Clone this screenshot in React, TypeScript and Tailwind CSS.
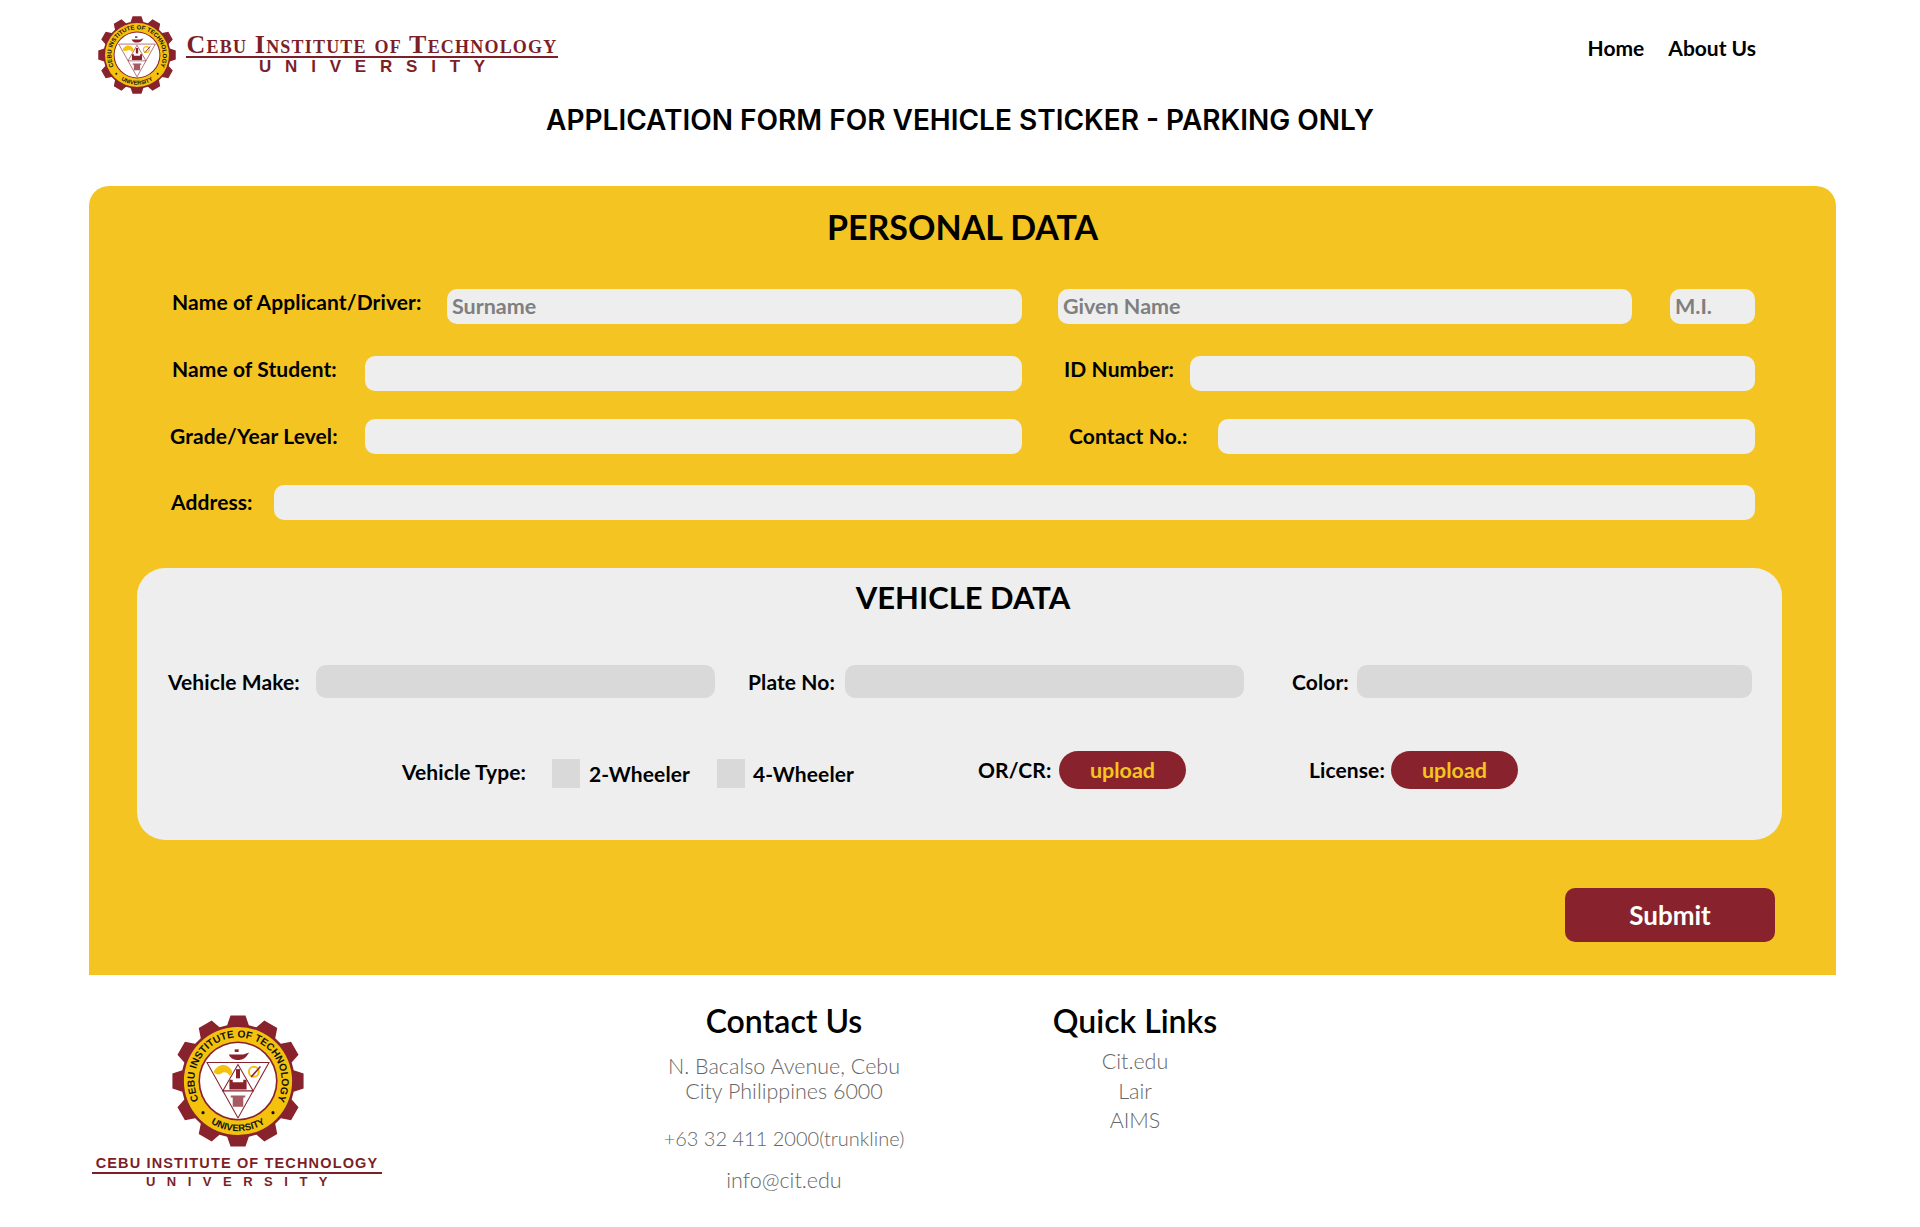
import React from "react";

const gearPoints = (() => {
  const pts: string[] = [];
  for (let i = 0; i < 12; i++) {
    const c = -90 + i * 30;
    const add = (deg: number, r: number) => {
      const a = (deg * Math.PI) / 180;
      pts.push(`${(100 + r * Math.cos(a)).toFixed(2)},${(100 + r * Math.sin(a)).toFixed(2)}`);
    };
    add(c - 11, 86);
    add(c - 6.5, 100);
    add(c + 6.5, 100);
    add(c + 11, 86);
  }
  return pts.join(" ");
})();

function Seal({ id, className }: { id: string; className: string }) {
  return (
    <svg viewBox="0 0 200 200" className={className}>
      <polygon points={gearPoints} fill="#88232d" />
      <circle cx="100" cy="100" r="82" fill="#f4c20d" />
      <circle cx="100" cy="100" r="60" fill="#88232d" />
      <circle cx="100" cy="100" r="57.5" fill="#ffffff" />
      <defs>
        <path id={`${id}-top`} d="M 49.4 142.4 A 66 66 0 1 1 150.6 142.4" />
        <path id={`${id}-bot`} d="M 37.7 143.6 A 76 76 0 0 0 162.3 143.6" />
      </defs>
      <text fontFamily="'Liberation Sans', sans-serif" fontWeight="700" fontSize="15.5" fill="#111111">
        <textPath href={`#${id}-top`} startOffset="50%" textAnchor="middle">CEBU INSTITUTE OF TECHNOLOGY</textPath>
      </text>
      <text fontFamily="'Liberation Sans', sans-serif" fontWeight="700" fontSize="14.5" fill="#111111">
        <textPath href={`#${id}-bot`} startOffset="50%" textAnchor="middle">UNIVERSITY</textPath>
      </text>
      <circle cx="47" cy="148" r="2.4" fill="#111111" />
      <circle cx="153" cy="148" r="2.4" fill="#111111" />
      <polygon points="53,72 147,72 100,156" fill="none" stroke="#88232d" strokeWidth="1.6" />
      <polygon points="100,75 77,115 123,115" fill="none" stroke="#88232d" strokeWidth="1.6" />
      <path d="M86 60 h22 l9 -3 l-3 4 c-2 4 -7 7 -12 7 h-4 c-5 0 -10 -3 -12 -8 z" fill="#88232d" />
      <rect x="95" y="52" width="6" height="4" fill="#88232d" />
      <path d="M63 86 c6 -12 20 -14 27 -3 c3 5 0 8 -3 9 c-2 -5 -8 -7 -13 -3 c-4 2 -8 1 -11 -3 z" fill="#f4c20d" />
      <circle cx="124" cy="86" r="7.5" fill="none" stroke="#f4c20d" strokeWidth="3" />
      <path d="M120 94 L134 78" stroke="#88232d" strokeWidth="2.4" />
      <path d="M97 82 h6 v14 h-6 z" fill="#88232d" />
      <path d="M87 98 h5 v4 h16 v-4 h5 v15 h-26 z" fill="#88232d" />
      <path d="M89 122 h22 v3 h-3 v14 h-16 v-14 h-3 z" fill="#88232d" opacity="0.75" />
    </svg>
  );
}

const labelCls = "font-['Lato','Liberation_Sans',sans-serif] font-bold text-[21px] leading-[24px] tracking-[0.1px] text-black whitespace-nowrap shrink-0";
const inputCls = "h-[35px] bg-[#eeeeee] rounded-[10px] px-[5px] pb-[2px] outline-none font-['Lato',sans-serif] font-bold text-[21.5px] placeholder:text-[#7f7f7f] shrink-0";
const grayCls = "h-[33px] bg-[#d9d9d9] rounded-[10px] outline-none shrink-0";
const uploadCls = "w-[127px] h-[38px] rounded-full bg-[#88232d] text-[#f4c522] font-['Lato',sans-serif] font-bold text-[21.5px] flex items-center justify-center shrink-0";

export default function App() {
  return (
    <div className="w-[1920px] h-[1227px] bg-white overflow-hidden font-['Lato',sans-serif]">
      <header className="h-[98px] pl-[97px] pr-[164px] flex items-start justify-between">
        <div className="flex items-start pt-[15px]">
          <Seal id="hdr" className="w-[78px] h-[78px] shrink-0 ml-[1px] mr-[1px] mt-[1px]" />
          <div className="ml-[9px] w-[372px] pt-[18px] flex flex-col items-stretch text-[#7c1f28]">
            <div className="font-['Liberation_Serif',serif] font-bold text-[26px] leading-[23px] tracking-[1.2px] [font-variant-caps:small-caps] whitespace-nowrap text-center border-b-[2px] border-[#7c1f28]">Cebu Institute of Technology</div>
            <div className="font-['Liberation_Sans',sans-serif] font-bold text-[17px] leading-[18px] tracking-[13.8px] text-center whitespace-nowrap pl-[14px]">UNIVERSITY</div>
          </div>
        </div>
        <nav className="flex items-center gap-[24px] pt-[36px] font-bold text-[21px] leading-[24px] text-black">
          <a>Home</a>
          <a>About Us</a>
        </nav>
      </header>

      <h1 className="h-[88px] pt-[4px] text-center font-['Inter',sans-serif] font-semibold text-[28px] leading-[36px] text-black whitespace-nowrap">
        APPLICATION FORM FOR VEHICLE STICKER - PARKING ONLY
      </h1>

      <main className="ml-[89px] w-[1747px] h-[789px] bg-[#f4c522] rounded-t-[20px] flex flex-col">
        <h2 className="mt-[21px] h-[40px] text-center font-bold text-[34px] leading-[40px] text-black">PERSONAL DATA</h2>

        <div className="mt-[42px] pl-[83px] pr-[81px] flex flex-col">
          <div className="flex items-center h-[35px]">
            <label className={`${labelCls} w-[275px] mb-[10px]`}>Name of Applicant/Driver:</label>
            <input className={`${inputCls} w-[575px]`} placeholder="Surname" />
            <input className={`${inputCls} w-[574px] ml-[36px]`} placeholder="Given Name" />
            <input className={`${inputCls} w-[85px] ml-[38px]`} placeholder="M.I." />
          </div>
          <div className="flex items-center h-[35px] mt-[32px]">
            <label className={`${labelCls} w-[193px] mb-[10px]`}>Name of Student:</label>
            <input className={`${inputCls} w-[657px]`} />
            <label className={`${labelCls} w-[125px] ml-[42px] mr-[1px] mb-[9px]`}>ID Number:</label>
            <input className={`${inputCls} w-[565px]`} />
          </div>
          <div className="flex items-center h-[35px] mt-[28px]">
            <label className={`${labelCls} w-[195px] -ml-[2px] mb-[2px]`}>Grade/Year Level:</label>
            <input className={`${inputCls} w-[657px]`} />
            <label className={`${labelCls} w-[148px] ml-[47px] mr-[1px] mb-[2px]`}>Contact No.:</label>
            <input className={`${inputCls} w-[537px]`} />
          </div>
          <div className="flex items-center h-[35px] mt-[31px]">
            <label className={`${labelCls} w-[102px] -ml-[1px] mr-[1px] mb-[2px]`}>Address:</label>
            <input className={`${inputCls} w-[1481px]`} />
          </div>
        </div>

        <section className="mt-[48px] ml-[48px] w-[1645px] h-[272px] bg-[#eeeeee] rounded-[28px] pt-[11px]">
          <h2 className="h-[36px] text-center font-bold text-[31px] leading-[36px] text-black pl-[7px]">VEHICLE DATA</h2>
          <div className="mt-[50px] pl-[31px] flex items-center h-[33px]">
            <label className={`${labelCls} w-[148px]`}>Vehicle Make:</label>
            <input className={`${grayCls} w-[399px]`} />
            <label className={`${labelCls} w-[97px] ml-[33px]`}>Plate No:</label>
            <input className={`${grayCls} w-[399px]`} />
            <label className={`${labelCls} w-[65px] ml-[48px]`}>Color:</label>
            <input className={`${grayCls} w-[395px]`} />
          </div>
          <div className="mt-[53px] pl-[265px] flex items-center h-[38px]">
            <label className={`${labelCls} w-[150px] mt-[3px]`}>Vehicle Type:</label>
            <span className="w-[28px] h-[29px] bg-[#d9d9d9] shrink-0 mt-[7px]" />
            <span className={`${labelCls} w-[137px] pl-[9px] mt-[7px]`}>2-Wheeler</span>
            <span className="w-[28px] h-[29px] bg-[#d9d9d9] shrink-0 mt-[7px]" />
            <span className={`${labelCls} w-[233px] pl-[8px] mt-[7px]`}>4-Wheeler</span>
            <label className={`${labelCls} w-[81px]`}>OR/CR:</label>
            <button className={uploadCls}>upload</button>
            <label className={`${labelCls} w-[81px] ml-[123px] mr-[1px]`}>License:</label>
            <button className={uploadCls}>upload</button>
          </div>
        </section>

        <button className="mt-[48px] mr-[61px] self-end w-[210px] h-[54px] bg-[#88232d] rounded-[10px] text-white font-bold text-[26px]">Submit</button>
      </main>

      <footer className="h-[252px] pl-[87px] flex items-start">
        <div className="w-[300px] pt-[39px] flex flex-col items-center text-[#7c1f28]">
          <Seal id="ftr" className="w-[132px] h-[132px] ml-[2px] mt-[1px] mb-[1px]" />
          <div className="w-[290px] mt-[7px] font-['Liberation_Sans',sans-serif] font-bold text-[14.5px] leading-[17px] tracking-[1.15px] text-center whitespace-nowrap border-b-[2px] border-[#7c1f28]">CEBU INSTITUTE OF TECHNOLOGY</div>
          <div className="font-['Liberation_Sans',sans-serif] font-bold text-[13px] leading-[15px] tracking-[11.5px] pl-[11px] text-center whitespace-nowrap">UNIVERSITY</div>
        </div>
        <div className="ml-[267px] w-[260px] pt-[27px] text-center">
          <h3 className="font-semibold text-[32px] leading-[38px] text-black">Contact Us</h3>
          <p className="mt-[14px] font-light text-[21.5px] leading-[25px] text-[#666666]">N. Bacalso Avenue, Cebu<br />City Philippines 6000</p>
          <p className="mt-[22px] font-light text-[20px] leading-[25px] text-[#666666]">+63 32 411 2000(trunkline)</p>
          <p className="mt-[17px] font-light text-[21.5px] leading-[25px] text-[#666666]">info@cit.edu</p>
        </div>
        <div className="ml-[121px] w-[200px] pt-[27px] text-center">
          <h3 className="font-semibold text-[32px] leading-[38px] text-black">Quick Links</h3>
          <ul className="mt-[7px] font-light text-[21.5px] leading-[29.5px] text-[#666666]">
            <li>Cit.edu</li>
            <li>Lair</li>
            <li>AIMS</li>
          </ul>
        </div>
      </footer>
    </div>
  );
}
